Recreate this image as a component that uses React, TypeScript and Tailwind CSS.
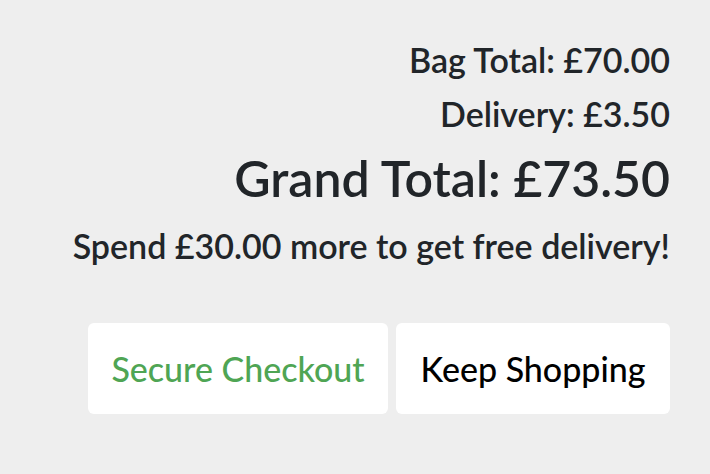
export default function App() {
  return (
    <div className="min-h-[474px] w-full bg-[#eeeeee] font-['Lato','Liberation_Sans',sans-serif] text-[#212529]">
      <div className="flex flex-col items-end pr-[40px] pt-[33px]">
        <p className="text-[34px] font-semibold leading-[54px]">Bag Total: £70.00</p>
        <p className="text-[34px] font-semibold leading-[54px]">Delivery: £3.50</p>
        <p className="text-[50px] font-semibold leading-[74px]">Grand Total: £73.50</p>
        <p className="text-[34px] font-semibold leading-[62px]">Spend £30.00 more to get free delivery!</p>

        <div className="mt-[46px] flex gap-2">
          <button className="h-[91px] w-[300px] rounded-md bg-white text-[34px] font-medium text-[#4fa554]">
            Secure Checkout
          </button>
          <button className="h-[91px] w-[274px] rounded-md bg-white text-[34px] font-medium text-black">
            Keep Shopping
          </button>
        </div>
      </div>
    </div>
  )
}
